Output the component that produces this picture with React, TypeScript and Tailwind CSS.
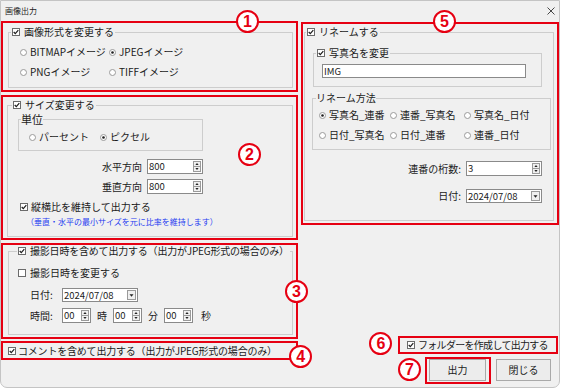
import type { ReactNode } from "react";

function Num({ n, className }: { n: string; className: string }) {
  return (
    <span
      className={`absolute z-10 flex h-[23px] w-[23px] items-center justify-center rounded-full border-2 border-[#e60012] bg-white font-['Liberation_Sans',sans-serif] text-[16px] font-bold leading-none text-[#e60012] ${className}`}
    >
      {n}
    </span>
  );
}

function Check({ on = true }: { on?: boolean }) {
  return (
    <svg width="8" height="8" viewBox="0 0 8 8" className="shrink-0">
      <rect x="0.5" y="0.5" width="7" height="7" fill="white" stroke="#6b6b6b" />
      {on && <path d="M1.7 4 L3.3 5.7 L6.3 2.1" fill="none" stroke="#1e1e1e" strokeWidth="1.2" />}
    </svg>
  );
}

function Radio({ on = false }: { on?: boolean }) {
  return (
    <svg width="7" height="7" viewBox="0 0 7 7" className="shrink-0">
      <circle cx="3.5" cy="3.5" r="3" fill="white" stroke="#9a9a9a" />
      {on && <circle cx="3.5" cy="3.5" r="1.3" fill="#1e1e1e" />}
    </svg>
  );
}

function Opt({ label, on }: { label: string; on?: boolean }) {
  return (
    <span className="flex items-center gap-[3px] whitespace-nowrap">
      <Radio on={on} />
      {label}
    </span>
  );
}

function Group({ legend, className, children }: { legend: ReactNode; className: string; children?: ReactNode }) {
  return (
    <fieldset className={`shrink-0 border border-[#cdcdcd] ${className}`}>
      {legend}
      {children}
    </fieldset>
  );
}

function Spin({ value, className }: { value: string; className: string }) {
  return (
    <div className={`flex h-[15px] items-center border border-[#8a8a8a] bg-white ${className}`}>
      <span className="flex-1 pl-[1px] text-[9.5px] leading-[13px]">{value}</span>
      <span className="mr-[1px] flex h-[11px] w-[8px] flex-col border border-[#9a9a9a] bg-[#f0f0f0]">
        <svg width="6" height="5" viewBox="0 0 6 5" className="flex-1">
          <path d="M1 3.6 L3 1.2 L5 3.6 Z" fill="#222" />
        </svg>
        <svg width="6" height="5" viewBox="0 0 6 5" className="flex-1 border-t border-[#9a9a9a]">
          <path d="M1 1.2 L3 3.6 L5 1.2 Z" fill="#222" />
        </svg>
      </span>
    </div>
  );
}

function Combo({ value, className }: { value: string; className: string }) {
  return (
    <div className={`flex h-[14px] items-center border border-[#8a8a8a] bg-white ${className}`}>
      <span className="flex-1 pl-[1px] text-[9.5px] leading-[12px]">{value}</span>
      <span className="mr-[1px] flex h-[10px] w-[9px] items-center justify-center border border-[#9a9a9a] bg-[#f0f0f0]">
        <svg width="5" height="3" viewBox="0 0 5 3">
          <path d="M0.5 0.3 L2.5 2.7 L4.5 0.3 Z" fill="#222" />
        </svg>
      </span>
    </div>
  );
}

function LeftColumn() {
  return (
    <div className="mt-[1px] flex w-[297px] shrink-0 flex-col">
      <section className="relative h-[71px] border-2 border-[#e60012]">
        <Num n="1" className="left-[233px] top-[-13px]" />
        <Group
          className="ml-[5px] mt-[3px] h-[62px] w-[285px]"
          legend={
            <legend className="ml-[2px] px-[1px]">
              <span className="flex items-center gap-[4px] leading-[12px]">
                <Check />
                画像形式を変更する
              </span>
            </legend>
          }
        >
          <div className="grid grid-cols-[89px_auto] grid-rows-[20px_20px] items-center pl-[11px] pt-[4px]">
            <Opt label="BITMAPイメージ" />
            <Opt label="JPEGイメージ" on />
            <Opt label="PNGイメージ" />
            <Opt label="TIFFイメージ" />
          </div>
        </Group>
      </section>

      <section className="relative mt-[3px] h-[145px] border-2 border-[#e60012]">
        <Num n="2" className="left-[235px] top-[46px]" />
        <Group
          className="ml-[4px] mt-[2px] h-[138px] w-[286px]"
          legend={
            <legend className="ml-[4px] px-[1px]">
              <span className="flex items-center gap-[4px] leading-[12px]">
                <Check />
                サイズ変更する
              </span>
            </legend>
          }
        >
          <Group
            className="ml-[10px] mt-[2px] h-[38px] w-[185px]"
            legend={<legend className="ml-[2px] text-[11px] leading-[12px]">単位</legend>}
          >
            <div className="grid grid-cols-[71px_auto] items-center pl-[10px] pt-[6px]">
              <Opt label="パーセント" />
              <Opt label="ピクセル" on />
            </div>
          </Group>
          <div className="mt-[8px] flex items-center gap-[5px]">
            <span className="w-[134px] text-right">水平方向</span>
            <Spin value="800" className="w-[56px]" />
          </div>
          <div className="mt-[5px] flex items-center gap-[5px]">
            <span className="w-[134px] text-right">垂直方向</span>
            <Spin value="800" className="w-[56px]" />
          </div>
          <div className="mt-[7px] flex items-center gap-[3px] pl-[12px]">
            <Check />
            縦横比を維持して出力する
          </div>
          <div className="mt-[4px] pl-[18px] text-[8px] leading-[10px] text-[#1f3cf0]">
            （垂直・水平の最小サイズを元に比率を維持します）
          </div>
        </Group>
      </section>

      <section className="relative mt-[3px] h-[96px] border-2 border-[#e60012]">
        <Num n="3" className="left-[282px] top-[35px]" />
        <Group
          className="ml-[5px] h-[90px] w-[285px]"
          legend={
            <legend className="ml-[8px] px-[1px]">
              <span className="flex items-center gap-[4px] whitespace-nowrap leading-[12px] tracking-[-0.2px]">
                <Check />
                撮影日時を含めて出力する（出力がJPEG形式の場合のみ）
              </span>
            </legend>
          }
        >
          <div className="mt-[10px] flex items-center gap-[4px] pl-[9px]">
            <Check on={false} />
            撮影日時を変更する
          </div>
          <div className="mt-[9px] flex items-center pl-[21px]">
            <span className="w-[32px]">日付:</span>
            <Combo value="2024/07/08" className="w-[76px]" />
          </div>
          <div className="mt-[6px] flex items-center pl-[21px]">
            <span className="w-[32px]">時間:</span>
            <Spin value="00" className="w-[29px]" />
            <span className="w-[22px] text-center">時</span>
            <Spin value="00" className="w-[29px]" />
            <span className="w-[22px] text-center">分</span>
            <Spin value="00" className="w-[29px]" />
            <span className="ml-[8px]">秒</span>
          </div>
        </Group>
      </section>

      <section className="relative mt-[2px] flex h-[19px] items-center gap-[2px] whitespace-nowrap border-2 border-[#e60012] pl-[5px] tracking-[-0.2px]">
        <Num n="4" className="left-[286px] top-[2px]" />
        <Check />
        コメントを含めて出力する（出力がJPEG形式の場合のみ）
      </section>
    </div>
  );
}

function RightColumn() {
  return (
    <div className="mt-[2px] flex w-[258px] shrink-0 flex-col">
      <section className="relative h-[203px] border-2 border-[#e60012]">
        <Num n="5" className="left-[130px] top-[-14px]" />
        <Group
          className="ml-[1px] mt-[2px] h-[195px] w-[250px]"
          legend={
            <legend className="ml-[1px] px-[1px]">
              <span className="flex items-center gap-[4px] leading-[12px]">
                <Check />
                リネームする
              </span>
            </legend>
          }
        >
          <Group
            className="ml-[8px] mt-[9px] h-[40px] w-[229px]"
            legend={
              <legend className="ml-[2px] px-[1px]">
                <span className="flex items-center gap-[4px] leading-[12px]">
                  <Check />
                  写真名を変更
                </span>
              </legend>
            }
          >
            <div className="ml-[8px] mt-[5px] flex h-[14px] w-[204px] items-center border border-[#8a8a8a] bg-white pl-[1px] text-[9.5px] leading-[12px]">
              IMG
            </div>
          </Group>
          <Group
            className="ml-[7px] mt-[5px] h-[58px] w-[239px]"
            legend={<legend className="ml-[3px] leading-[12px]">リネーム方法</legend>}
          >
            <div className="grid grid-cols-[71px_74px_auto] grid-rows-[20px_20px] items-center pl-[6px] pt-[1px]">
              <Opt label="写真名_連番" on />
              <Opt label="連番_写真名" />
              <Opt label="写真名_日付" />
              <Opt label="日付_写真名" />
              <Opt label="日付_連番" />
              <Opt label="連番_日付" />
            </div>
          </Group>
          <div className="mt-[11px] flex items-center justify-end gap-[5px] pr-[11px]">
            <span>連番の桁数:</span>
            <Spin value="3" className="w-[76px]" />
          </div>
          <div className="mt-[13px] flex items-center justify-end gap-[5px] pr-[11px]">
            <span>日付:</span>
            <Combo value="2024/07/08" className="w-[76px]" />
          </div>
        </Group>
      </section>

      <section className="relative mr-[1px] mt-[111px] flex h-[18px] w-[160px] items-center gap-[3px] self-end whitespace-nowrap border-2 border-[#e60012] pl-[7px] tracking-[-0.7px]">
        <Num n="6" className="left-[-31px] top-[-6px]" />
        <Check />
        フォルダーを作成して出力する
      </section>

      <div className="mt-[3px] flex items-start justify-end gap-[5px] pr-[8px]">
        <section className="relative h-[27px] w-[66px] border-2 border-[#e60012]">
          <Num n="7" className="left-[-29px] top-[-1px]" />
          <button className="ml-[2px] flex h-[22px] w-[57px] items-center justify-center border border-[#a9a9a9] bg-[#ececec]">
            出力
          </button>
        </section>
        <button className="mt-[2px] flex h-[22px] w-[55px] items-center justify-center border border-[#a9a9a9] bg-[#ececec]">
          閉じる
        </button>
      </div>
    </div>
  );
}

export default function App() {
  return (
    <div className="h-[389px] w-[562px] bg-white font-['Noto_Sans_CJK_JP','Noto_Sans',sans-serif] text-[10px] leading-[12px] text-[#1b1b1b]">
      <div className="flex h-[388px] w-[560px] flex-col overflow-hidden rounded-b-[7px] border border-[#c4c4c4] bg-[#f0f0f0]">
        <div className="flex h-[19px] shrink-0 items-center justify-between pl-[4px] pr-[4px]">
          <span className="text-[8px] leading-[10px]">画像出力</span>
          <svg width="8" height="8" viewBox="0 0 8 8">
            <path d="M0.5 0.5 L7.5 7.5 M7.5 0.5 L0.5 7.5" stroke="#333" strokeWidth="0.9" />
          </svg>
        </div>
        <div className="flex items-start gap-[3px]">
          <LeftColumn />
          <RightColumn />
        </div>
      </div>
    </div>
  );
}
